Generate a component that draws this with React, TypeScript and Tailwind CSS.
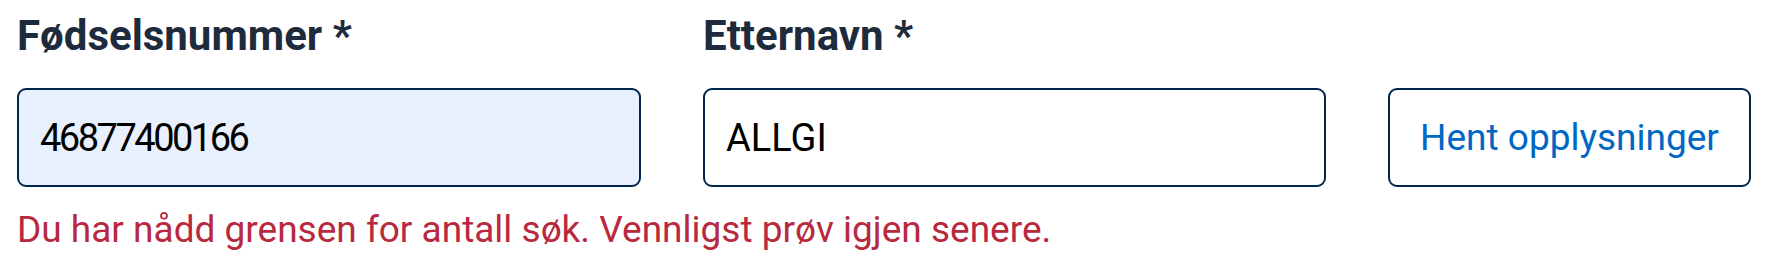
import React from "react";

const App: React.FC = () => {
  return (
    <div className="bg-white px-[17px] pt-[8px] font-['Roboto',sans-serif]" style={{ height: 272 }}>
      <div className="flex items-end gap-[62px]">
        <div className="w-[624px]">
          <label className="block text-[42px] font-bold leading-[56px] text-[#1e2b3c]">Fødselsnummer *</label>
          <input
            defaultValue="46877400166"
            className="mt-[24px] h-[99px] w-full rounded-[9px] border-2 border-[#00264d] bg-[#e8f0fd] px-[21px] text-[38px] tracking-[-2.5px] text-black outline-none"
          />
        </div>
        <div className="w-[623px]">
          <label className="block text-[42px] font-bold leading-[56px] text-[#1e2b3c]">Etternavn *</label>
          <input
            defaultValue="ALLGI"
            className="mt-[24px] h-[99px] w-full rounded-[9px] border-2 border-[#00264d] bg-white px-[21px] text-[38px] text-black outline-none"
          />
        </div>
        <button className="h-[99px] w-[363px] rounded-[9px] border-2 border-[#00264d] bg-white text-[37px] text-[#0067c5]">
          Hent opplysninger
        </button>
      </div>
      <p className="mt-[21px] text-[37px] leading-[44px] text-[#b8283e]">
        Du har nådd grensen for antall søk. Vennligst prøv igjen senere.
      </p>
    </div>
  );
};

export default App;
